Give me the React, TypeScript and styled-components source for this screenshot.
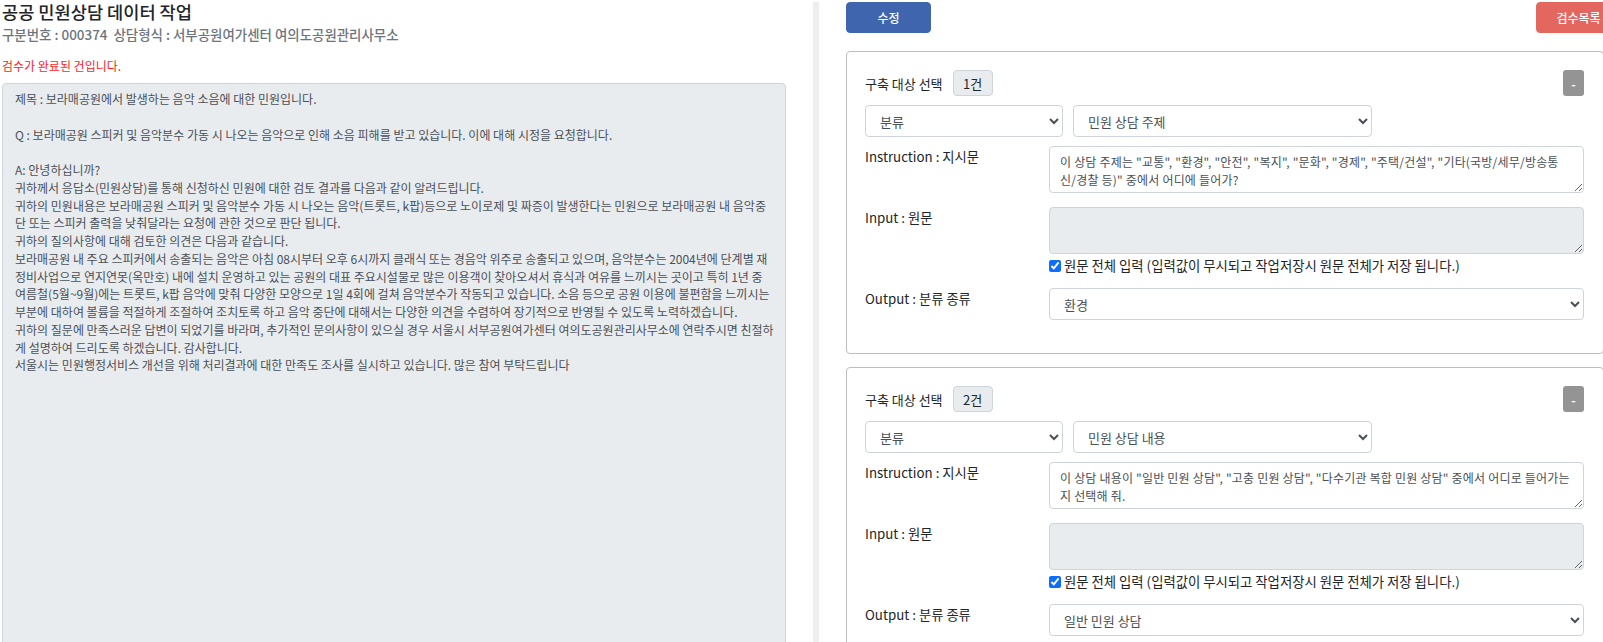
import React from 'react';
import styled, { createGlobalStyle } from 'styled-components';

const GlobalStyle = createGlobalStyle`
  html, body {
    margin: 0;
    padding: 0;
    background: #fff;
    overflow: hidden;
  }
  body {
    font-family: "Noto Sans CJK KR", "Noto Sans", sans-serif;
    color: #212529;
  }
`;

const Page = styled.div`
  display: flex;
  width: 1603px;
  height: 642px;
  overflow: hidden;
`;

const LeftColumn = styled.section`
  flex: none;
  width: 784px;
  margin-left: 2px;
`;

const Title = styled.h1`
  margin: 0;
  font-size: 17.6px;
  line-height: 24px;
  font-weight: 500;
  color: #212529;
`;

const SubTitle = styled.div`
  font-size: 13.45px;
  line-height: 20px;
  font-weight: 500;
  color: #6c757d;
  white-space: pre;
`;

const Notice = styled.p`
  margin: 13px 0 0;
  font-size: 12px;
  line-height: 18px;
  color: #ff1a1a;
`;

const OriginalText = styled.div`
  box-sizing: border-box;
  height: 600px;
  margin-top: 8px;
  padding: 6px 10.5px 6px 12px;
  background: #e9ecef;
  border: 1px solid #ced4da;
  border-radius: 4px;
  font-size: 12px;
  line-height: 17.75px;
  color: #495057;
  white-space: pre-wrap;
`;

const Divider = styled.div`
  flex: none;
  width: 6px;
  height: 642px;
  margin: 2px 0 0 27px;
  background: #eeeeee;
`;

const RightColumn = styled.section`
  flex: none;
  width: 775px;
  margin-left: 27px;
  padding-top: 2px;
`;

const Toolbar = styled.div`
  display: flex;
  justify-content: space-between;
  margin-bottom: 18px;
`;

const ActionButton = styled.button<{ $tone: string }>`
  width: 85px;
  height: 31px;
  padding: 0;
  border: 1px solid ${(p) => p.$tone};
  border-radius: 4px;
  background: ${(p) => p.$tone};
  color: #fff;
  font-family: inherit;
  font-size: 12px;
  font-weight: 500;
`;

const Card = styled.div`
  box-sizing: border-box;
  width: 758px;
  margin-bottom: 13px;
  padding: 18px 19px 33px 18px;
  border: 1px solid #bdbdbd;
  border-radius: 4px;
`;

const CardHeader = styled.div`
  display: flex;
  align-items: center;
  height: 26px;
  font-size: 13px;
  color: #212529;
`;

const CountBadge = styled.span`
  box-sizing: border-box;
  display: flex;
  align-items: center;
  justify-content: center;
  width: 40px;
  height: 26px;
  margin-left: 10px;
  background: #e9ecef;
  border: 1px solid #ced4da;
  border-radius: 4px;
  font-size: 13px;
  color: #212529;
`;

const RemoveButton = styled.button`
  width: 21px;
  height: 26px;
  margin-left: auto;
  padding: 0;
  border: 0;
  border-radius: 3px;
  background: #949494;
  color: #fff;
  font-family: inherit;
  font-size: 12px;
  font-weight: 700;
`;

const Select = styled.select<{ $width: string }>`
  box-sizing: border-box;
  width: ${(p) => p.$width};
  height: 32px;
  padding: 0 0 0 10px;
  background-color: #fff;
  border: 1px solid #ced4da;
  border-radius: 4px;
  font-family: inherit;
  font-size: 13px;
  color: #495057;
`;

const SelectRow = styled.div`
  display: flex;
  gap: 10px;
  margin-top: 9px;
`;

const FieldRow = styled.div<{ $gap: number }>`
  display: grid;
  grid-template-columns: 184px 535px;
  margin-top: ${(p) => p.$gap}px;
`;

const FieldLabel = styled.div`
  font-size: 13.3px;
  line-height: 21px;
  color: #212529;
`;

const TextArea = styled.textarea<{ $endPad?: number }>`
  box-sizing: border-box;
  display: block;
  width: 100%;
  height: 47px;
  padding: 6px ${(p) => p.$endPad ?? 10}px 0 10px;
  background: ${(p) => (p.disabled ? '#e9ecef' : '#fff')};
  border: 1px solid #ced4da;
  border-radius: 4px;
  font-family: inherit;
  font-size: 12px;
  letter-spacing: 0.2px;
  line-height: 18px;
  color: #495057;
  resize: vertical;
`;

const CheckLine = styled.label`
  display: flex;
  align-items: center;
  height: 21px;
  margin-top: 1px;
  font-size: 13.35px;
  color: #212529;
`;

const CheckBox = styled.input`
  width: 12px;
  height: 12px;
  margin: 0 3px 0 0;
  accent-color: #0d6efd;
`;

const items = [
  {
    count: '1건',
    topic: '민원 상담 주제',
    instruction:
      '이 상담 주제는 "교통", "환경", "안전", "복지", "문화", "경제", "주택/건설", "기타(국방/세무/방송통신/경찰 등)" 중에서 어디에 들어가?',
    endPad: 19,
    output: '환경',
  },
  {
    count: '2건',
    topic: '민원 상담 내용',
    instruction:
      '이 상담 내용이 "일반 민원 상담", "고충 민원 상담", "다수기관 복합 민원 상담" 중에서 어디로 들어가는지 선택해 줘.',
    endPad: 9,
    output: '일반 민원 상담',
  },
];

const original = `제목 : 보라매공원에서 발생하는 음악 소음에 대한 민원입니다.

Q : 보라매공원 스피커 및 음악분수 가동 시 나오는 음악으로 인해 소음 피해를 받고 있습니다. 이에 대해 시정을 요청합니다.

A: 안녕하십니까?
귀하께서 응답소(민원상담)를 통해 신청하신 민원에 대한 검토 결과를 다음과 같이 알려드립니다.
귀하의 민원내용은 보라매공원 스피커 및 음악분수 가동 시 나오는 음악(트롯트, k팝)등으로 노이로제 및 짜증이 발생한다는 민원으로 보라매공원 내 음악중단 또는 스피커 출력을 낮춰달라는 요청에 관한 것으로 판단 됩니다.
귀하의 질의사항에 대해 검토한 의견은 다음과 같습니다.
보라매공원 내 주요 스피커에서 송출되는 음악은 아침 08시부터 오후 6시까지 클래식 또는 경음악 위주로 송출되고 있으며, 음악분수는 2004년에 단계별 재정비사업으로 연지연못(옥만호) 내에 설치 운영하고 있는 공원의 대표 주요시설물로 많은 이용객이 찾아오셔서 휴식과 여유를 느끼시는 곳이고 특히 1년 중 여름철(5월~9월)에는 트롯트, k팝 음악에 맞춰 다양한 모양으로 1일 4회에 걸쳐 음악분수가 작동되고 있습니다. 소음 등으로 공원 이용에 불편함을 느끼시는 부분에 대하여 볼륨을 적절하게 조절하여 조치토록 하고 음악 중단에 대해서는 다양한 의견을 수렴하여 장기적으로 반영될 수 있도록 노력하겠습니다.
귀하의 질문에 만족스러운 답변이 되었기를 바라며, 추가적인 문의사항이 있으실 경우 서울시 서부공원여가센터 여의도공원관리사무소에 연락주시면 친절하게 설명하여 드리도록 하겠습니다. 감사합니다.
서울시는 민원행정서비스 개선을 위해 처리결과에 대한 만족도 조사를 실시하고 있습니다. 많은 참여 부탁드립니다`;

const App: React.FC = () => {
  return (
    <Page>
      <GlobalStyle />
      <LeftColumn>
        <Title>공공 민원상담 데이터 작업</Title>
        <SubTitle>구분번호 : 000374  상담형식 : 서부공원여가센터 여의도공원관리사무소</SubTitle>
        <Notice>검수가 완료된 건입니다.</Notice>
        <OriginalText>{original}</OriginalText>
      </LeftColumn>
      <Divider />
      <RightColumn>
        <Toolbar>
          <ActionButton $tone="#3f65ae">수정</ActionButton>
          <ActionButton $tone="#e4675f">검수목록</ActionButton>
        </Toolbar>
        {items.map((item) => (
          <Card key={item.count}>
            <CardHeader>
              구축 대상 선택
              <CountBadge>{item.count}</CountBadge>
              <RemoveButton>-</RemoveButton>
            </CardHeader>
            <SelectRow>
              <Select $width="198px" defaultValue="분류">
                <option>분류</option>
              </Select>
              <Select $width="299px" defaultValue={item.topic}>
                <option>{item.topic}</option>
              </Select>
            </SelectRow>
            <FieldRow $gap={9}>
              <FieldLabel>Instruction : 지시문</FieldLabel>
              <TextArea readOnly $endPad={item.endPad} defaultValue={item.instruction} />
            </FieldRow>
            <FieldRow $gap={14}>
              <FieldLabel>Input : 원문</FieldLabel>
              <div>
                <TextArea disabled />
                <CheckLine>
                  <CheckBox type="checkbox" defaultChecked />
                  원문 전체 입력 (입력값이 무시되고 작업저장시 원문 전체가 저장 됩니다.)
                </CheckLine>
              </div>
            </FieldRow>
            <FieldRow $gap={12}>
              <FieldLabel>Output : 분류 종류</FieldLabel>
              <Select $width="100%" defaultValue={item.output}>
                <option>{item.output}</option>
              </Select>
            </FieldRow>
          </Card>
        ))}
      </RightColumn>
    </Page>
  );
};

export default App;
